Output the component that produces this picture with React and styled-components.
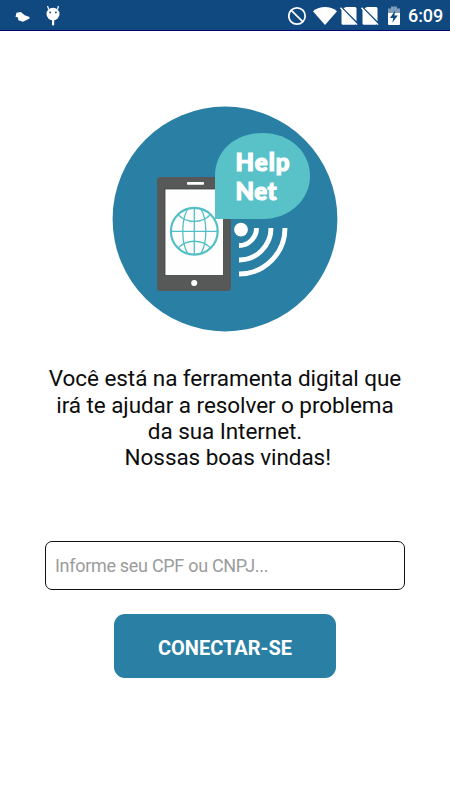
import React, { useState } from 'react';
import styled, { createGlobalStyle } from 'styled-components';

const GlobalStyle = createGlobalStyle`
  * { box-sizing: border-box; }
  body {
    margin: 0;
    background: #fff;
    font-family: Roboto, "Liberation Sans", sans-serif;
  }
`;

const Screen = styled.div`
  display: flex;
  flex-direction: column;
  width: 450px;
  height: 800px;
  background: #fff;
`;

const StatusBar = styled.header`
  display: flex;
  align-items: center;
  justify-content: space-between;
  height: 31px;
  padding: 1px 8px 0 15px;
  background: #10497f;
  border-bottom: 1px solid #00007b;
  color: #fff;
`;

const StatusGroup = styled.div`
  display: flex;
  align-items: center;
  gap: ${(props) => props.$gap}px;
`;

const StatusIcon = styled.svg`
  display: block;
  flex: none;
  fill: #fff;
  margin-left: ${(props) => props.$left || 0}px;
`;

const Clock = styled.span`
  margin-left: 7px;
  font-size: 18px;
  line-height: 28px;
  font-weight: 500;
  letter-spacing: -0.1px;
  width: 34px;
  white-space: nowrap;
`;

const Content = styled.main`
  display: flex;
  flex-direction: column;
  align-items: center;
  padding: 75px 45px 0;
`;

const LogoImage = styled.svg`
  display: block;
  width: 226px;
  height: 226px;
`;

const Welcome = styled.p`
  margin: 33.4px 0 0;
  width: 360px;
  text-align: center;
  white-space: nowrap;
  font-size: 22.5px;
  line-height: 26.3px;
  letter-spacing: -0.07px;
  color: #0c0c0c;
`;

const DocumentInput = styled.input`
  width: 360px;
  height: 49px;
  margin-top: 70.4px;
  padding: 0 9px;
  border: 1px solid #111;
  border-radius: 7px;
  background: #fff;
  font-family: inherit;
  font-size: 18px;
  letter-spacing: -0.3px;
  color: #111;
  outline: none;

  &::placeholder {
    color: #9b9b9b;
    opacity: 1;
  }
`;

const ConnectButton = styled.button`
  width: 222px;
  height: 64px;
  margin-top: 24.4px;
  padding: 3px 0 0;
  border: none;
  border-radius: 11px;
  background: #2a7fa5;
  font-family: inherit;
  font-size: 20px;
  font-weight: 700;
  color: #fff;
`;

const Logo = () => (
  <LogoImage viewBox="0 0 226 226">
    <circle cx="113" cy="113" r="112.4" fill="#2a7fa5" />

    {/* phone */}
    <rect x="45" y="71" width="74" height="114" rx="3" fill="#575958" />
    <rect x="53" y="83" width="58.5" height="86.5" fill="#fefefe" stroke="#3f4140" strokeWidth="0.8" />
    <rect x="75" y="76" width="17" height="2.8" rx="0.8" fill="#fff" />
    <circle cx="82.2" cy="177" r="3" fill="#fff" />

    {/* globe */}
    <g fill="none" stroke="#52bfc6" strokeWidth="1.3">
      <circle cx="82.3" cy="125.3" r="23.4" strokeWidth="2.2" />
      <path d="M82.3 101.7v47.2M58.7 125.3h47.2" />
      <path d="M76 102.5c-7 11-7 34.6 0 45.6M88.600 102.500c7 11 7 34.600 0 45.600" />
      <path d="M66.500 109c8 8.500 23.600 8.500 31.600 0M66.500 141.600c8-8.500 23.600-8.500 31.600 0" />
    </g>

    {/* speech bubble */}
    <path
      d="M103 113V70C103 45 123 27 150.500 27S198 46 198 70S177 113 151 113Z"
      fill="#59c2c9"
    />
    <g fill="#fff" stroke="#fff" strokeWidth="1.2" fontFamily="Lato, sans-serif" fontWeight="900" fontSize="24">
      <text x="123.5" y="64.6" textLength="54">Help</text>
      <text x="123.5" y="93.6" textLength="41">Net</text>
    </g>

    {/* signal */}
    <circle cx="129" cy="123.7" r="6.9" fill="#fff" />
    <g fill="none" stroke="#fff" strokeWidth="4.9">
      <path d="M144.500 122A17.500 17.500 0 0 1 127 139.500" />
      <path d="M159 122A32 32 0 0 1 127 154" />
      <path d="M173 122A46 46 0 0 1 127 168" />
    </g>
  </LogoImage>
);

const NoSim = ({ left }) => (
  <StatusIcon $left={left} width="20" height="20" viewBox="0 0 20 20">
    <path d="M7 1H16Q17.500 1 17.500 2.500V15.200L4.500 2.200ZM1 2.200L2 1.300L18.500 18.200L17.600 19L16.500 18.200Q16.300 18.800 15.500 18.800H4Q2.500 18.800 2.500 17.300V3.900Z" />
  </StatusIcon>
);

const App = () => {
  const [documentNumber, setDocumentNumber] = useState('');

  return (
    <>
      <GlobalStyle />
      <Screen>
        <StatusBar>
          <StatusGroup $gap={16}>
            <StatusIcon width="15" height="20" viewBox="0 0 15 20">
              <path d="M1.500 6.700L5.700 6L9.700 9.300L14.500 11V12.500L12 13.700L8 15.800L3.300 14.200L3 11.500L.5 10.700Z" />
            </StatusIcon>
            <StatusIcon width="15" height="22" viewBox="0 0 15 22">
              <path d="M1.500 1L2.700 4.200M12.500 1L11.500 4.200" stroke="#fff" strokeWidth="1.200" />
              <ellipse cx="7" cy="9" rx="6.500" ry="6.300" />
              <rect x="6" y="14.500" width="2.200" height="6" rx="0.800" />
              <circle cx="4.200" cy="7.400" r="0.900" fill="#10497f" />
              <circle cx="9.900" cy="7.400" r="0.900" fill="#10497f" />
            </StatusIcon>
          </StatusGroup>
          <StatusGroup $gap={0}>
            <StatusIcon width="20" height="20" viewBox="0 0 20 20">
              <circle cx="9" cy="10" r="8.200" fill="none" stroke="#fff" strokeWidth="1.700" />
              <path d="M3.300 4.300L14.700 15.700" stroke="#fff" strokeWidth="1.700" />
            </StatusIcon>
            <StatusIcon $left={5} width="24" height="20" viewBox="0 0 24 20">
              <path d="M0 5.200C7 -0.400 17 -0.400 24 5.200L12 19Z" />
            </StatusIcon>
            <NoSim left={2} />
            <NoSim left={1} />
            <StatusIcon $left={7} width="14" height="20" viewBox="0 0 14 20">
              <path d="M4 0.500H10V2.500H13V7H1V2.500H4Z" fillOpacity="0.450" />
              <path d="M1 7H13V18Q13 19 12 19H2Q1 19 1 18Z" />
              <path d="M8.200 4.500L3 12H6.300L5.300 16.800L10.800 9.500H7.400Z" fill="#10497f" />
            </StatusIcon>
            <Clock>6:09</Clock>
          </StatusGroup>
        </StatusBar>

        <Content>
          <Logo />
          <Welcome>
            Você está na ferramenta digital que
            <br />
            irá te ajudar a resolver o problema
            <br />
            da sua Internet.
            <br />
            &nbsp;Nossas boas vindas!
          </Welcome>
          <DocumentInput
            placeholder="Informe seu CPF ou CNPJ..."
            value={documentNumber}
            onChange={(e) => setDocumentNumber(e.target.value)}
          />
          <ConnectButton>CONECTAR-SE</ConnectButton>
        </Content>
      </Screen>
    </>
  );
};

export default App;
